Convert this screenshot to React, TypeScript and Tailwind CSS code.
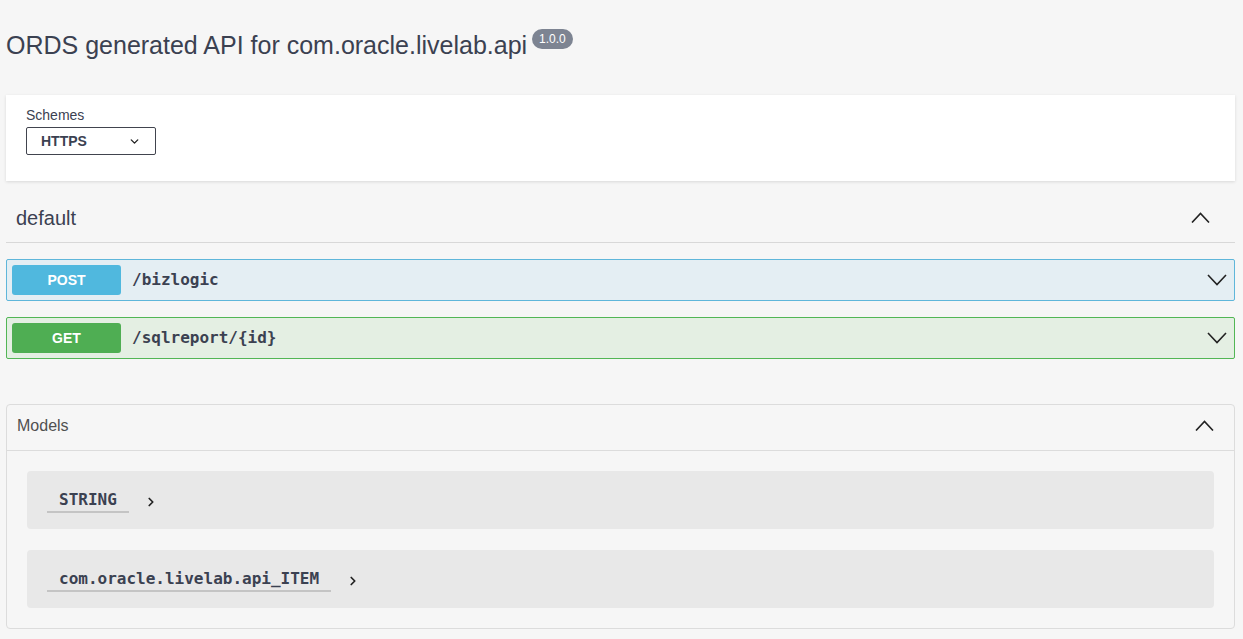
import { ChevronDown, ChevronRight } from "lucide-react";

const sans = { fontFamily: '"Liberation Sans", Arial, sans-serif' };
const mono = { fontFamily: '"DejaVu Sans Mono", "Liberation Mono", monospace' };

interface Op {
  method: string;
  path: string;
  border: string;
  bg: string;
  badge: string;
}

const ops: Op[] = [
  { method: "POST", path: "/bizlogic", border: "border-[#5fb6da]", bg: "bg-[#e4eef3]", badge: "bg-[#50b8de]" },
  { method: "GET", path: "/sqlreport/{id}", border: "border-[#52b655]", bg: "bg-[#e4efe3]", badge: "bg-[#4fae53]" },
];

const models = ["STRING", "com.oracle.livelab.api_ITEM"];

// thin wide chevron used by swagger section headers
function Arrow({ up = false, w = 20 }: { up?: boolean; w?: number }) {
  const h = w / 2;
  return (
    <svg width={w} height={h + 2} viewBox={`0 0 ${w} ${h + 2}`} className="text-[#222]">
      <polyline
        points={up ? `1,${h + 1} ${w / 2},1.5 ${w - 1},${h + 1}` : `1,1 ${w / 2},${h + 0.5} ${w - 1},1`}
        fill="none"
        stroke="currentColor"
        strokeWidth={1.6}
      />
    </svg>
  );
}

function OpBlock({ op }: { op: Op }) {
  return (
    <div className={`flex h-[42px] items-center rounded-[2px] border ${op.border} ${op.bg} pl-[5px] pr-[7px]`}>
      <span className={`flex h-[30px] w-[109px] items-center justify-center rounded-[3px] text-[14px] font-bold text-white ${op.badge}`}>
        {op.method}
      </span>
      <span className="ml-[11px] flex-1 text-[16px] font-bold text-[#3b4151]" style={mono}>
        {op.path}
      </span>
      <Arrow w={20} />
    </div>
  );
}

export default function App() {
  return (
    <div className="min-h-[639px] bg-[#f6f6f6] pb-[10px] pl-[6px] pr-[8px] pt-[25px]" style={sans}>
      <div className="flex items-start">
        <h2 className="text-[25px] leading-[40px] text-[#3b4151]">ORDS generated API for com.oracle.livelab.api</h2>
        <span className="ml-[5px] mt-[4px] flex h-[20px] items-center rounded-full bg-[#7d8492] px-[7px] text-[12px] text-white">
          1.0.0
        </span>
      </div>

      <div className="mt-[30px] h-[86px] bg-white px-[20px] pt-[12px] shadow-[0_1px_3px_rgba(0,0,0,0.12)]">
        <div className="text-[14px] leading-[16px] text-[#3b4151]">Schemes</div>
        <div className="mt-[4px] flex h-[28px] w-[130px] items-center justify-between rounded-[2px] border border-[#41444e] pl-[14px] pr-[14px]">
          <span className="text-[14px] font-semibold text-[#3b4151]">HTTPS</span>
          <ChevronDown className="h-[13px] w-[13px] text-[#222]" strokeWidth={2.5} />
        </div>
      </div>

      <div className="mt-[14px] flex h-[48px] items-center justify-between border-b border-[#d8d8d8] pb-[2px] pl-[10px] pr-[25px]">
        <span className="text-[20px] text-[#3b4151]">default</span>
        <Arrow up w={19} />
      </div>

      <div className="mt-[16px] flex flex-col gap-[16px]">
        {ops.map((op) => (
          <OpBlock key={op.method} op={op} />
        ))}
      </div>

      <div className="mt-[45px] rounded-[4px] border border-[#dcdcdc]">
        <div className="flex h-[46px] items-center justify-between border-b border-[#dcdcdc] pb-[4px] pl-[10px] pr-[20px]">
          <span className="text-[16px] text-[#505050]">Models</span>
          <Arrow up w={19} />
        </div>
        <div className="flex flex-col gap-[21px] px-[20px] pb-[20px] pt-[20px]">
          {models.map((m) => (
            <div key={m} className="flex h-[58px] items-center rounded-[4px] bg-[#e8e8e8] pl-[20px] pt-[3px]">
              <span
                className="border-b-2 border-[#c4c4c4] px-[12px] pb-[1px] text-[16px] font-bold leading-[20px] text-[#3b4151]"
                style={mono}
              >
                {m}
              </span>
              <ChevronRight className="ml-[15px] h-[14px] w-[14px] text-[#222]" strokeWidth={3} />
            </div>
          ))}
        </div>
      </div>
    </div>
  );
}
